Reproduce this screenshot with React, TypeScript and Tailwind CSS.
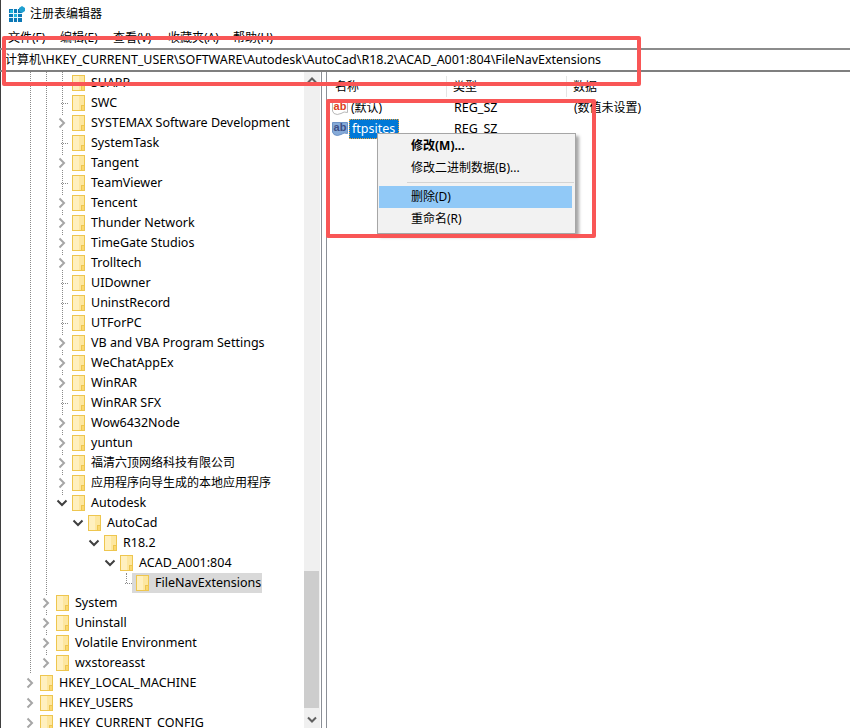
const uiFont = "font-['Noto_Sans','Noto_Sans_CJK_SC',sans-serif]"

type TreeRow = {
  label: string
  pad: string
  node: "closed" | "open" | "leaf"
  cjk?: boolean
  selected?: boolean
}

const rows: TreeRow[] = [
  { label: "SUAPP", pad: "pl-[54px]", node: "leaf" },
  { label: "SWC", pad: "pl-[54px]", node: "leaf" },
  { label: "SYSTEMAX Software Development", pad: "pl-[54px]", node: "closed" },
  { label: "SystemTask", pad: "pl-[54px]", node: "leaf" },
  { label: "Tangent", pad: "pl-[54px]", node: "closed" },
  { label: "TeamViewer", pad: "pl-[54px]", node: "leaf" },
  { label: "Tencent", pad: "pl-[54px]", node: "closed" },
  { label: "Thunder Network", pad: "pl-[54px]", node: "closed" },
  { label: "TimeGate Studios", pad: "pl-[54px]", node: "closed" },
  { label: "Trolltech", pad: "pl-[54px]", node: "closed" },
  { label: "UIDowner", pad: "pl-[54px]", node: "leaf" },
  { label: "UninstRecord", pad: "pl-[54px]", node: "leaf" },
  { label: "UTForPC", pad: "pl-[54px]", node: "leaf" },
  { label: "VB and VBA Program Settings", pad: "pl-[54px]", node: "closed" },
  { label: "WeChatAppEx", pad: "pl-[54px]", node: "closed" },
  { label: "WinRAR", pad: "pl-[54px]", node: "closed" },
  { label: "WinRAR SFX", pad: "pl-[54px]", node: "leaf" },
  { label: "Wow6432Node", pad: "pl-[54px]", node: "closed" },
  { label: "yuntun", pad: "pl-[54px]", node: "closed" },
  { label: "福清六顶网络科技有限公司", pad: "pl-[54px]", node: "closed", cjk: true },
  { label: "应用程序向导生成的本地应用程序", pad: "pl-[54px]", node: "closed", cjk: true },
  { label: "Autodesk", pad: "pl-[54px]", node: "open" },
  { label: "AutoCad", pad: "pl-[70px]", node: "open" },
  { label: "R18.2", pad: "pl-[86px]", node: "open" },
  { label: "ACAD_A001:804", pad: "pl-[102px]", node: "open" },
  { label: "FileNavExtensions", pad: "pl-[118px]", node: "leaf", selected: true },
  { label: "System", pad: "pl-[38px]", node: "closed" },
  { label: "Uninstall", pad: "pl-[38px]", node: "closed" },
  { label: "Volatile Environment", pad: "pl-[38px]", node: "closed" },
  { label: "wxstoreasst", pad: "pl-[38px]", node: "closed" },
  { label: "HKEY_LOCAL_MACHINE", pad: "pl-[22px]", node: "closed" },
  { label: "HKEY_USERS", pad: "pl-[22px]", node: "closed" },
  { label: "HKEY_CURRENT_CONFIG", pad: "pl-[22px]", node: "closed" },
]

function Folder() {
  return (
    <svg width="13" height="16" viewBox="0 0 13 16" className="shrink-0">
      <rect x="0.5" y="0.5" width="12" height="15" fill="#fde7a0" stroke="#eec64f" />
      <rect x="1" y="1" width="6" height="14" fill="#fff0bf" />
      <rect x="9.5" y="10.5" width="3" height="5" fill="#fbd86f" stroke="#eec64f" strokeWidth="1" />
    </svg>
  )
}

function Node({ kind }: { kind: TreeRow["node"] }) {
  if (kind === "leaf") {
    return (
      <div className="w-4 h-5 shrink-0 flex items-center justify-end pr-[2px]">
        <div className="w-[7px] border-t border-dotted border-[#8a8a8a]" />
      </div>
    )
  }
  return (
    <div className="w-4 h-[14px] shrink-0 flex items-center justify-center bg-white relative">
      {kind === "closed" ? (
        <svg width="8" height="12" viewBox="0 0 8 12">
          <path d="M1.5 1.5 L6 6 L1.5 10.5" fill="none" stroke="#a6a6a6" strokeWidth="2" />
        </svg>
      ) : (
        <svg width="12" height="8" viewBox="0 0 12 8">
          <path d="M1.5 1.5 L6 6 L10.5 1.5" fill="none" stroke="#404040" strokeWidth="2" />
        </svg>
      )}
    </div>
  )
}

function RegIcon({ selected }: { selected?: boolean }) {
  return (
    <svg width="16" height="16" viewBox="0 0 16 16" className="shrink-0">
      <path
        d="M0.5 1.5 H15.5 V12.5 Q12 11 9 13.5 Q5 15.5 2 13.5 L0.5 11 Z"
        fill={selected ? "#85aad8" : "#ffffff"}
        stroke={selected ? "#6d93c6" : "#b8b8b8"}
      />
      <text
        x="8"
        y="10"
        textAnchor="middle"
        fontSize="11"
        fontWeight="700"
        fontFamily="'Liberation Sans', sans-serif"
        fill={selected ? "#3c4f86" : "#dc3f22"}
      >
        ab
      </text>
    </svg>
  )
}

function AppIcon() {
  return (
    <svg width="16" height="16" viewBox="0 0 16 16" className="shrink-0">
      <rect x="0" y="3" width="13" height="13" fill="#0b77b5" />
      <path d="M4.5 3V16M8.5 3V16M0 7.5H13M0 11.5H13" stroke="#e8f6fb" strokeWidth="1" />
      <rect x="5" y="8" width="3" height="3" fill="#21b5dc" />
      <rect x="1" y="4" width="3" height="3" fill="#21b5dc" />
      <path d="M13 0 L16 2 L16 5 L13 7 L10 5 L10 2 Z" fill="#1f9fd0" />
    </svg>
  )
}

export default function App() {
  return (
    <div
      className={`relative w-[850px] h-[728px] overflow-hidden bg-white text-black flex flex-col shadow-[inset_1px_0_0_#3f3f3f] ${uiFont}`}
    >
      <div className="h-7 shrink-0 flex items-center pl-[9px] gap-[5px] text-[12px]">
        <AppIcon />
        <span>注册表编辑器</span>
      </div>

      <div className="h-5 shrink-0 flex items-center pl-2 text-[12px]">
        <span className="w-[52px]">文件(F)</span>
        <span className="w-[53px]">编辑(E)</span>
        <span className="w-[55px]">查看(V)</span>
        <span className="w-[65px]">收藏夹(A)</span>
        <span>帮助(H)</span>
      </div>

      <div className="h-6 shrink-0 flex items-center pl-[5px] border-y-2 border-y-[#7f7f7f] border-t-[#8c8c8c] text-[12.5px] tracking-[-0.025px]">
        <span className="text-[12px]">计算机</span>
        <span>\HKEY_CURRENT_USER\SOFTWARE\Autodesk\AutoCad\R18.2\ACAD_A001:804\FileNavExtensions</span>
      </div>

      <div className="flex-1 flex min-h-0">
        <div className="relative w-[304px] shrink-0 overflow-hidden pt-px">
          <div className="absolute left-[30px] top-0 h-[601px] border-l border-dotted border-[#8a8a8a]" />
          <div className="absolute left-[46px] top-0 h-[591px] border-l border-dotted border-[#8a8a8a]" />
          <div className="absolute left-[62px] top-0 h-[431px] border-l border-dotted border-[#8a8a8a]" />
          <div className="absolute left-[126px] top-[501px] h-[10px] border-l border-dotted border-[#8a8a8a]" />

          {rows.map((row) => (
            <div key={row.label} className={`relative flex items-center h-5 ${row.pad}`}>
              <Node kind={row.node} />
              <div
                className={`flex items-center h-5 gap-[6px] ${
                  row.selected ? "bg-[#d9d9d9] -ml-[2px] pl-1 pr-1 w-[130px]" : "pl-[2px]"
                }`}
              >
                <Folder />
                <span className={`whitespace-nowrap ${row.cjk ? "text-[12px]" : "text-[12.5px]"}`}>{row.label}</span>
              </div>
            </div>
          ))}
        </div>

        <div className="w-4 shrink-0 bg-[#f0f0f0] flex flex-col items-center justify-between relative">
          <svg width="10" height="7" viewBox="0 0 10 7" className="mt-[5px]">
            <path d="M1 5.5 L5 1.5 L9 5.5" fill="none" stroke="#606060" strokeWidth="2" />
          </svg>
          <div className="absolute left-0 top-[499px] w-[15px] h-[137px] bg-[#cdcdcd]" />
          <svg width="10" height="7" viewBox="0 0 10 7" className="mb-[5px]">
            <path d="M1 1.5 L5 5.5 L9 1.5" fill="none" stroke="#606060" strokeWidth="2" />
          </svg>
        </div>

        <div className="w-[6px] shrink-0 border-x border-[#8b8f96] ml-px bg-white" />

        <div className="flex-1 min-w-0 pl-[5px]">
          <div className="h-[25px] flex text-[12px] pt-1">
            <div className="w-[115px] pl-[3px] border-r border-[#e5e5e5] leading-[22px]">名称</div>
            <div className="w-[120px] pl-[6px] border-r border-[#e5e5e5] leading-[22px]">类型</div>
            <div className="pl-[6px] leading-[22px]">数据</div>
          </div>

          <div className="flex items-center h-5 text-[12px] mt-[1px]">
            <div className="w-[115px] flex items-center gap-[3px]">
              <RegIcon />
              <span>(默认)</span>
            </div>
            <div className="w-[120px] pl-[7px] text-[12.5px]">REG_SZ</div>
            <div className="pl-[7px]">(数值未设置)</div>
          </div>

          <div className="flex items-center h-5 text-[12px] mt-[1px]">
            <div className="w-[115px] flex items-center gap-px">
              <RegIcon selected />
              <span className="h-5 w-[50px] pl-[2px] bg-[#0078d7] text-white border border-dotted border-[#e8a23c] text-[12.5px] leading-[18px]">
                ftpsites
              </span>
            </div>
            <div className="w-[120px] pl-[7px] text-[12.5px]">REG_SZ</div>
          </div>
        </div>
      </div>

      {/* right click menu */}
      <div className="absolute left-[377px] top-[133px] w-[199px] h-[101px] bg-[#f2f2f2] border border-[#a6a6a6] shadow-[3px_3px_3px_rgba(0,0,0,0.35)] pt-px px-px text-[12px]">
        <div className="h-[22px] pl-8 leading-[22px] font-bold">修改(M)...</div>
        <div className="h-[22px] pl-8 leading-[22px]">修改二进制数据(B)...</div>
        <div className="h-[7px] pl-7 flex items-center">
          <div className="w-full border-t border-[#d4d4d4]" />
        </div>
        <div className="h-[22px] pl-8 leading-[22px] bg-[#91c9f7] mr-[2px]">删除(D)</div>
        <div className="h-[22px] pl-8 leading-[22px]">重命名(R)</div>
      </div>

      {/* red annotation boxes */}
      <div className="absolute left-[2px] top-[36px] w-[639px] h-[50px] border-4 border-[#f95656] rounded-[2px]" />
      <div className="absolute left-[326px] top-[99px] w-[270px] h-[139px] border-4 border-[#f95656] rounded-[2px]" />
    </div>
  )
}
